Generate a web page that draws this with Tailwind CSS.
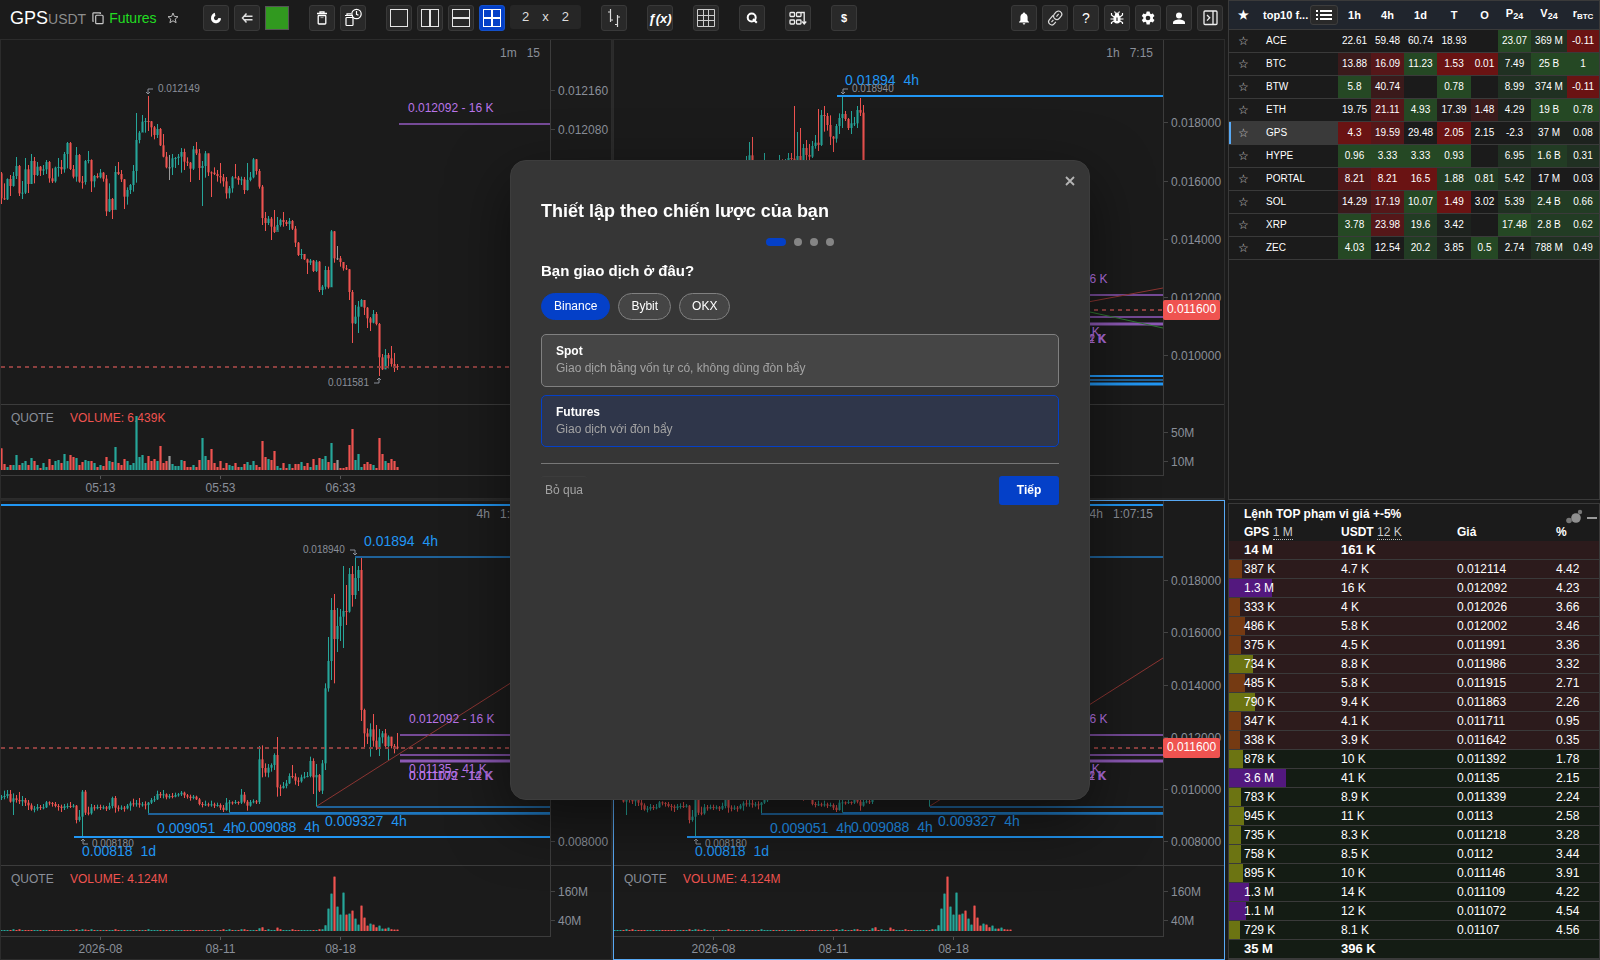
<!DOCTYPE html>
<html lang="vi">
<head>
<meta charset="utf-8">
<title>GPSUSDT Futures</title>
<script src="https://cdn.jsdelivr.net/npm/@tailwindcss/browser@4"></script>
</head>
<body class="bg-[#1b1b1b] text-white font-['Liberation_Sans',Arial,sans-serif]">
<div class="flex h-screen overflow-hidden">

<!-- Charts side -->
<div class="flex min-w-0 flex-1 flex-col">
<header class="flex h-[39px] shrink-0 items-start pl-2.5 pr-0.5 pt-[5px]">
  <div class="flex h-[26px] w-[193px] shrink-0 items-center">
    <div class="flex items-baseline"><h1 class="text-lg leading-6">GPS</h1><span class="text-sm text-[#8d8d8d]">USDT</span></div>
    <button aria-label="Sao chép" class="ml-1.5 text-[#c8c8c8]"><svg width="12" height="13" viewBox="0 0 13 14" fill="none" stroke="currentColor" stroke-width="1.300"><rect x="4" y="3.500" width="8" height="9" rx="1"/><path d="M2 10H1V1.500A.8.8 0 0 1 1.800.8H9V2"/></svg></button>
    <span class="ml-[5px] text-sm text-[#22dd22]">Futures</span>
    <button aria-label="Yêu thích" class="ml-2.5 text-[#bbb]"><svg width="12" height="12" viewBox="0 0 12 12" fill="none" stroke="currentColor"><path d="M6 1l1.400 3.400 3.600.3-2.800 2.400.9 3.600L6 8.800l-3.100 1.900.9-3.600L1 4.700l3.600-.3z"/></svg></button>
  </div>
  <div class="flex gap-5">
    <div class="flex gap-[5px]">
      <button aria-label="Nam châm" class="flex size-[26px] items-center justify-center rounded-[3px] border border-[#393939] bg-[#292929]"><svg width="12" height="12" viewBox="0 0 12 12" fill="#fff"><path d="M4.800.800C2.600 1.600 1 3.600 1 6.200 1 9 3.200 11.200 6 11.200s5-2.200 5-5L8.300 6C8.200 7.400 7.200 8.200 6 8.200c-1.300 0-2-1-2-2.100 0-1 .6-1.700 1.400-2z"/></svg></button>
      <button aria-label="Quay lại" class="flex size-[26px] items-center justify-center rounded-[3px] border border-[#393939] bg-[#292929]"><svg width="12" height="12" viewBox="0 0 12 12" fill="none" stroke="#ddd" stroke-width="1.500"><path d="M5.500 1.500 1.500 6l4 4.500M3 4.300h8.500M3 7.700h8.500"/></svg></button>
      <button aria-label="Màu" class="mt-px size-6 border border-[#555] bg-[#31991f]"></button>
    </div>
    <div class="flex gap-[5px]">
      <button aria-label="Xóa" class="flex size-[26px] items-center justify-center rounded-[3px] border border-[#393939] bg-[#292929]"><svg width="12" height="14" viewBox="0 0 12 14" fill="none" stroke="#fff" stroke-width="1.300"><path d="M1 2.500h10M4 2V.800h4V2"/><rect x="2.200" y="4.500" width="7.600" height="8.500" rx=".8"/><path d="M4.500 6.500h3" stroke="#888"/></svg></button>
      <button aria-label="Xóa theo thời gian" class="flex size-[26px] items-center justify-center rounded-[3px] border border-[#393939] bg-[#292929]"><svg width="18" height="20" viewBox="0 0 18 20" fill="none" stroke="#fff" stroke-width="1.200"><path d="M1 7.500h8M3 7V5.800h4"/><rect x="2" y="9.500" width="7" height="8" rx=".8"/><circle cx="12.500" cy="6" r="4.700"/><path d="M12.500 3v3.300l2 1"/></svg></button>
    </div>
    <div class="flex gap-[5px]">
      <button aria-label="1 biểu đồ" class="flex size-[26px] items-center justify-center rounded-[3px] border border-[#393939] bg-[#292929]"><svg width="18" height="18" fill="none" stroke="#e6e6e6"><rect x=".5" y=".5" width="17" height="17"/></svg></button>
      <button aria-label="2 cột" class="flex size-[26px] items-center justify-center rounded-[3px] border border-[#393939] bg-[#292929]"><svg width="18" height="18" fill="none" stroke="#e6e6e6"><rect x=".5" y=".5" width="17" height="17"/><path d="M9 0v18" stroke-width="2"/></svg></button>
      <button aria-label="2 hàng" class="flex size-[26px] items-center justify-center rounded-[3px] border border-[#393939] bg-[#292929]"><svg width="18" height="18" fill="none" stroke="#e6e6e6"><rect x=".5" y=".5" width="17" height="17"/><path d="M0 9h18" stroke-width="2"/></svg></button>
      <button aria-label="4 biểu đồ" class="flex size-[26px] items-center justify-center rounded-[3px] border border-[#1450c8] bg-[#0440c8]"><svg width="18" height="18" fill="none" stroke="#fff"><rect x=".5" y=".5" width="17" height="17"/><path d="M9 0v18M0 9h18" stroke-width="2"/></svg></button>
      <div class="flex h-6 w-[71px] items-center justify-between rounded-[3px] bg-[#262626] px-3 text-[13px] text-[#ddd]"><span>2</span><span>x</span><span>2</span></div>
    </div>
    <button aria-label="Kiểu nến" class="flex size-[26px] items-center justify-center rounded-[3px] border border-[#393939] bg-[#292929]"><svg width="14" height="20" viewBox="0 0 14 20" fill="none" stroke="#ddd" stroke-width="1.200"><path d="M3.500 1v13M1 4h2.500M3.500 12H6M10.500 7v12M8 16.500h2.500M10.500 9H13"/></svg></button>
    <button aria-label="Chỉ báo" class="flex size-[26px] items-center justify-center rounded-[3px] border border-[#393939] bg-[#292929] text-[13px] font-bold italic leading-none">ƒ(x)</button>
    <button aria-label="Lưới" class="flex size-[26px] items-center justify-center rounded-[3px] border border-[#393939] bg-[#292929]"><svg width="18" height="18" fill="none" stroke="#ccc"><path d="M.5.5h17v17H.5zM6.500 0v18M11.500 0v18M0 6.500h18M0 11.500h18"/></svg></button>
    <button aria-label="Tìm kiếm" class="flex size-[26px] items-center justify-center rounded-[3px] border border-[#393939] bg-[#292929]"><svg width="12" height="12" viewBox="0 0 12 12" fill="none" stroke="#fff" stroke-width="2"><circle cx="5.700" cy="5.500" r="4"/><path d="m7 7 3.800 3.800"/></svg></button>
    <button aria-label="Sắp xếp" class="flex size-[26px] items-center justify-center rounded-[3px] border border-[#393939] bg-[#292929]"><svg width="18" height="15" viewBox="0 0 18 15" fill="none" stroke="#eee" stroke-width="1.300"><rect x="1" y="1.500" width="4.500" height="4" rx=".8"/><rect x="7.500" y="1.500" width="4.500" height="4" rx=".8"/><rect x="1" y="9" width="4.500" height="4" rx=".8"/><rect x="7.500" y="9" width="4.500" height="4" rx=".8"/><path d="M12 1.500h3.200V13m-2-2.500 2 2.500 2-2.500"/></svg></button>
    <button aria-label="Giá" class="flex size-[26px] items-center justify-center rounded-[3px] border border-[#393939] bg-[#292929] text-[11px] font-bold">$</button>
  </div>
  <div class="ml-auto flex gap-[5px]">
    <button aria-label="Thông báo" class="flex size-[26px] items-center justify-center rounded-[3px] border border-[#393939] bg-[#292929]"><svg width="12" height="13" viewBox="0 0 12 13" fill="#fff"><path d="M6 .5c.6 0 1 .4 1 1C8.800 2 9.600 3.500 9.600 5.200V8.500L11 10v.6H1V10l1.400-1.500V5.200C2.400 3.500 3.200 2 5 1.500c0-.6.4-1 1-1zM4.700 11.300h2.600a1.300 1.300 0 0 1-2.600 0z"/></svg></button>
    <button aria-label="Liên kết" class="flex size-[26px] items-center justify-center rounded-[3px] border border-[#393939] bg-[#292929]"><svg width="16" height="16" viewBox="0 0 16 16" fill="none" stroke="#ddd" stroke-width="1.200"><g transform="rotate(40 8 8)"><rect x="5" y="-.3" width="6.500" height="9" rx="3.200"/><path d="M8.200 2.500v3.500"/><path d="M4.800 7.300v5.500a3.200 3.200 0 0 0 6.400 0V10.500"/><path d="M8 10.500v3"/></g></svg></button>
    <button aria-label="Trợ giúp" class="flex size-[26px] items-center justify-center rounded-[3px] border border-[#393939] bg-[#292929] text-sm">?</button>
    <button aria-label="Báo lỗi" class="flex size-[26px] items-center justify-center rounded-[3px] border border-[#393939] bg-[#292929]"><svg width="14" height="14" viewBox="0 0 14 14" stroke="#fff" stroke-width="1.200" fill="none"><ellipse cx="7" cy="8" rx="2.900" ry="4" fill="#fff"/><circle cx="7" cy="3.500" r="1.500" fill="#fff"/><path d="M4 6 1.500 4V2M10 6l2.500-2V2M4 8H.5M10 8h3.500M4 10l-2.500 1.500V13M10 10l2.500 1.500V13M5.500 2 4.500.5M8.500 2l1-1.500"/><path d="M7 6.500v3.500" stroke="#292929"/></svg></button>
    <button aria-label="Cài đặt" class="flex size-[26px] items-center justify-center rounded-[3px] border border-[#393939] bg-[#292929]"><svg width="16" height="16" viewBox="0 0 24 24" fill="#fff"><path d="M19.400 13c0-.3.100-.6.100-1s0-.7-.1-1l2-1.600a.5.5 0 0 0 .1-.6l-1.900-3.300a.5.5 0 0 0-.6-.2l-2.400 1a7 7 0 0 0-1.600-1l-.4-2.500a.5.5 0 0 0-.5-.4h-3.800a.5.5 0 0 0-.5.400L9.400 5.300a7 7 0 0 0-1.600 1l-2.400-1a.5.5 0 0 0-.6.200L2.900 8.800a.5.5 0 0 0 .1.600L5 11c0 .3-.1.700-.1 1s0 .7.100 1l-2 1.600a.5.5 0 0 0-.1.600l1.900 3.300c.1.200.4.300.6.200l2.400-1a7 7 0 0 0 1.600 1l.4 2.500c0 .2.200.4.500.4h3.800c.3 0 .5-.2.500-.4l.4-2.500a7 7 0 0 0 1.600-1l2.400 1c.2.100.5 0 .6-.2l1.900-3.300a.5.5 0 0 0-.1-.6zM12 15.500a3.500 3.500 0 1 1 0-7 3.500 3.500 0 0 1 0 7z"/></svg></button>
    <button aria-label="Tài khoản" class="flex size-[26px] items-center justify-center rounded-[3px] border border-[#393939] bg-[#292929]"><svg width="12" height="13" viewBox="0 0 12 13" fill="#fff"><circle cx="6" cy="3.500" r="3"/><path d="M0 12V10.500C0 8.600 3.500 7.600 6 7.600s6 1 6 2.900V12z"/></svg></button>
    <button aria-label="Ẩn bảng" class="flex size-[26px] items-center justify-center rounded-[3px] border border-[#393939] bg-[#292929]"><svg width="15" height="16" viewBox="0 0 15 16" fill="none" stroke="#eee" stroke-width="1.300"><rect x="1" y="1" width="13" height="13.500" rx="1"/><path d="M10 1v13.500M4 5l2.700 2.800L4 10.600"/></svg></button>
  </div>
</header>
<main id="charts" class="grid min-h-0 flex-1 grid-cols-2 grid-rows-2 gap-px bg-[#2a2a2a] [&_text]:whitespace-pre"></main>
</div>

<!-- Sidebar -->
<aside class="ml-[3px] flex w-[372px] shrink-0 flex-col gap-[3px]">
  <section class="min-h-0 flex-1 border border-[#3a3a3a]">
    <table class="w-full table-fixed border-collapse text-center text-[10px]">
      <colgroup><col class="w-[29px]"><col><col class="w-[33px]"><col class="w-[33px]"><col class="w-[33px]"><col class="w-[34px]"><col class="w-[27px]"><col class="w-[33px]"><col class="w-[36px]"><col class="w-[32px]"></colgroup>
      <thead><tr class="h-7 border-b border-[#3a3a3a] bg-[#20252d] text-[11px] font-bold leading-4">
        <th class="text-xs leading-4">★</th>
        <th><div class="flex items-center justify-between pl-[5px]"><span>top10 f...</span><button aria-label="Danh sách" class="flex h-5 w-7 items-center justify-center rounded-[3px] border border-[#3d3d3d] bg-[#292929]"><svg width="16" height="12" stroke="#fff" stroke-width="2"><path d="M0 2h2M4 2h12M0 6h2M4 6h12M0 10h2M4 10h12"/></svg></button></div></th>
        <th>1h</th><th>4h</th><th>1d</th><th>T</th><th>O</th>
        <th class="pb-1">P<sub class="text-[9px]">24</sub></th><th class="pb-1">V<sub class="text-[9px]">24</sub></th><th class="whitespace-nowrap pb-1">r<sub class="text-[8px]">BTC</sub></th>
      </tr></thead>
      <tbody id="coins"></tbody>
    </table>
  </section>
  <section class="shrink-0 border border-[#3a3a3a] text-xs">
    <div class="flex h-[19px] items-end justify-between pl-[15px] pr-0.5">
      <h2 class="font-bold leading-[18px]">Lệnh TOP phạm vi giá +-5%</h2>
      <div class="relative h-3.5">
        <button aria-label="Bong bóng" class="absolute right-3.5 top-0"><svg width="17" height="16" fill="#909090"><circle cx="10" cy="9" r="4.800"/><circle cx="3" cy="11.500" r="2.800" fill="#777"/><circle cx="14" cy="3" r="2.200" fill="#777"/></svg></button>
        <button aria-label="Thu gọn" class="absolute right-0 top-0"><svg width="11" height="16" stroke="#999" stroke-width="2"><path d="M1 9h10"/></svg></button>
      </div>
    </div>
    <table class="w-full table-fixed border-collapse text-left">
      <colgroup><col class="w-28"><col class="w-[116px]"><col class="w-[99px]"><col></colgroup>
      <thead><tr class="h-[18px] leading-4"><th class="pl-[15px]">GPS <span class="border-b border-dotted border-[#bbb] font-normal text-[#ccc]">1 M</span></th><th>USDT <span class="border-b border-dotted border-[#bbb] font-normal text-[#ccc]">12 K</span></th><th>Giá</th><th>%</th></tr></thead>
      <tbody id="book"></tbody>
    </table>
  </section>
</aside>
</div>

<!-- Setup dialog -->
<div role="dialog" aria-labelledby="dlg" class="fixed inset-0 m-auto flex h-[640px] w-[580px] flex-col rounded-2xl border border-[#3d3d3d] bg-[#363636] px-[30px] pt-9 shadow-[0_20px_60px_rgba(0,0,0,0.5)]">
  <button aria-label="Đóng" class="absolute right-3 top-[13px] flex size-3.5 items-center justify-center text-[#b5b5b5]"><svg width="10" height="10" stroke="currentColor" stroke-width="1.800"><path d="m1 1 8 8M9 1 1 9"/></svg></button>
  <h2 id="dlg" class="text-lg font-bold leading-7">Thiết lập theo chiến lược của bạn</h2>
  <div class="mt-[13px] flex justify-center gap-2"><span class="h-2 w-5 rounded bg-[#0440c8]"></span><span class="size-2 rounded-full bg-[#858585]"></span><span class="size-2 rounded-full bg-[#858585]"></span><span class="size-2 rounded-full bg-[#858585]"></span></div>
  <h3 class="mt-[15px] text-[15px] font-bold leading-5">Bạn giao dịch ở đâu?</h3>
  <div class="mt-3 flex gap-2 text-xs">
    <button class="h-[27px] rounded-full border border-[#0440c8] bg-[#0440c8] px-3 pb-px">Binance</button>
    <button class="h-[27px] rounded-full border border-[#808080] bg-[#454545] px-3 pb-px">Bybit</button>
    <button class="h-[27px] rounded-full border border-[#808080] bg-[#454545] px-3 pb-px">OKX</button>
  </div>
  <button class="mt-3.5 h-[53px] rounded-[5px] border border-[#808080] bg-[#454545] px-3.5 pb-0.5 text-left text-xs"><strong class="block leading-[17px]">Spot</strong><span class="block leading-[17px] text-[#a3a3a3]">Giao dịch bằng vốn tự có, không dùng đòn bẩy</span></button>
  <button class="mt-2 h-[52px] rounded-[5px] border border-[#0440c8] bg-[#2f364a] px-3.5 text-left text-xs"><strong class="block leading-[17px]">Futures</strong><span class="block leading-[17px] text-[#a3a3a3]">Giao dịch với đòn bẩy</span></button>
  <div class="mt-4 flex items-start justify-between border-t border-[#777] pt-3 text-xs">
    <button class="h-[29px] rounded-[3px] border-t border-[#3c3c3c] px-1 pb-0.5 text-[#a3a3a3]">Bỏ qua</button>
    <button class="h-[29px] w-[60px] rounded-[3px] bg-[#0440c8] pb-0.5 font-bold">Tiếp</button>
  </div>
</div>

<script>
const RED = '#ef5350', GREEN = '#26a69a', GREY = '#9a9a9a', BLUE = '#2196f3', PURPLE = '#b974e8', MUTED = '#8a8f99';

// close,high,low per candle in thirds of a pixel from the top; each opens at the previous close
const minute = { open: 400, neutral: [56, 112], candles: `475,396,492 478,430,480 417,415,480 438,405,468 408,396,440 378,351,417 460,375,468 458,423,477 388,354,462 432,375,459 363,342,432 405,351,430 380,366,408 392,378,408 388,375,405 366,360,402 415,363,428 424,385,429 383,380,428 381,354,410 388,360,402 342,336,398 309,306,385 387,306,390 410,375,415 345,321,425 425,342,428 426,408,446 363,360,434 360,333,370 424,358,456 408,405,442 412,400,415 398,387,415 416,396,425 514,405,528 477,430,516 510,474,537 396,378,508 402,366,405 418,390,426 470,417,507 450,442,494 435,432,462 393,375,455 300,219,428 278,273,310 245,225,276 243,234,278 244,168,273 262,243,290 285,258,298 267,252,294 316,264,318 350,282,352 382,336,385 382,345,420 355,342,405 354,351,384 350,342,375 336,324,398 365,326,390 368,352,378 386,366,426 328,318,390 340,306,345 384,327,420 378,363,498 340,333,413 397,340,408 398,394,471 402,382,405 408,390,425 412,369,430 424,402,440 460,411,476 445,438,475 412,408,458 413,372,415 420,408,434 418,410,435 450,411,462 420,369,452 412,396,424 358,354,415 393,357,404 440,387,446 534,435,555 549,516,573 536,528,555 560,531,600 576,510,579 555,531,570 540,536,560 546,516,560 552,540,558 543,534,570 566,540,570 608,558,621 645,606,648 642,627,657 658,642,660 668,656,702 662,657,675 693,660,696 665,660,696 750,663,756 740,735,765 690,678,748 742,680,746 574,570,741 655,573,668 655,618,660 666,648,680 685,666,692 688,675,690 756,687,780 850,750,909 830,795,852 800,783,879 780,777,800 803,780,825 835,801,864 848,831,873 822,810,850 852,816,856 952,849,1008 988,942,990 945,927,988 955,939,985 972,918,980 978,939,996 980,972,990`,
  volume: [65,18,9,15,15,45,15,21,27,15,36,27,15,6,21,9,33,15,27,30,21,48,27,45,39,36,15,24,30,27,27,21,9,15,12,39,27,24,69,21,15,33,27,15,21,162,39,45,21,42,27,33,27,72,21,27,42,18,12,12,30,27,9,9,15,9,30,96,42,30,63,21,9,27,6,21,15,12,21,9,9,18,24,15,27,15,9,87,39,33,30,57,12,6,21,6,18,6,18,18,24,12,21,9,33,15,36,33,42,24,81,21,30,6,6,9,75,123,30,48,9,18,24,18,15,6,96,48,27,21,33,27,9] };
const fourHour = { open: 474, offset: 139, candles: `470,465,480 468,452,478 462,450,475 485,450,488 475,460,525 480,465,488 484,456,492 480,468,498 488,474,498 496,480,510 508,490,512 506,498,517 501,492,512 503,495,510 502,492,508 487,483,504 489,484,496 492,486,500 498,486,502 500,492,512 504,494,516 499,492,510 498,490,506 500,486,504 497,492,503 540,495,550 530,510,545 455,450,588 518,450,525 520,500,526 502,492,524 505,495,512 501,494,508 504,494,510 502,496,508 506,498,513 498,488,510 474,470,505 503,468,518 506,496,514 503,496,510 505,498,515 497,492,508 490,484,512 492,476,500 490,480,500 494,474,503 493,486,500 495,484,508 488,486,522 480,474,492 478,468,486 462,452,480 466,456,474 463,450,475 472,460,478 468,462,476 470,459,475 465,458,472 463,459,470 458,453,468 466,455,474 470,462,476 474,464,482 470,465,478 478,467,480 492,474,496 495,486,502 493,482,498 495,488,500 493,482,500 497,488,504 495,488,500 503,490,510 510,495,516 488,474,512 487,480,518 489,484,494 486,480,492 488,484,494 464,447,492 485,456,490 497,480,512 486,480,500 484,478,490 486,480,492 358,318,492 384,316,412 398,370,410 383,372,412 375,370,395 345,340,390 442,291,470 444,434,468 438,426,446 430,420,445 408,400,432 410,375,415 422,400,434 424,412,438 412,404,428 410,396,416 408,396,412 363,350,412 412,355,462 405,372,500 452,402,456 370,360,462 145,130,390 63,-9,155 -90,-126,120 -3,-138,130 -42,-96,36 -70,-93,3 -87,-222,24 -85,-165,-45 -198,-216,-82 -135,-222,-100 -186,-250,-123 -210,-222,-147 210,-247,243 280,206,325 290,265,312 268,250,350 302,222,320 322,255,330 292,267,348 280,273,310 318,267,325 290,286,362 318,290,325 320,312,340 325,279,328`,
  volume: Array(133).fill(3).map((v, i) => ({4:5,6:5,25:5,27:5,28:4,30:5,38:5,49:5,74:5,76:5,80:5,81:5,86:8,87:11,89:5,92:10,93:5,97:5,106:5,107:5,108:17,109:67,110:112,111:163,112:73,113:49,114:115,115:49,116:52,117:61,118:37,119:19,120:76,121:40,122:16,123:22,124:19,125:11,126:16,127:7,128:7,129:10,130:5,131:4,132:4})[i] || v) };
const hour = { open: 400, first: 132, candles: `360,348,400 346,306,400 370,291,400 395,370,400 390,380,400 385,375,400 370,339,400 375,365,400 372,368,400 380,370,400 375,365,400 362,345,400 364,358,400 362,357,400 354,339,400 356,339,400 370,198,400 348,276,400 360,264,400 324,312,400 345,300,400 350,312,400 318,303,354 308,285,326 315,207,333 225,210,318 228,198,275 255,219,272 290,226,315 296,288,336 258,252,308 234,220,282 222,171,264 237,213,243 264,234,270 250,213,282 250,231,258 210,198,264 218,174,228 700,195,720`, volume: [] };

function decode(set) {
  let open = set.open;
  return set.candles.split(' ').map((c, i) => {
    const [close, high, low] = c.split(',').map(Number);
    const color = set.neutral?.includes(i) ? GREY : close > open ? RED : GREEN;
    const d = { x: (set.first || 0) + 3 * i, top: Math.min(open, close) / 3, h: Math.max(1, Math.abs(close - open) / 3), high: high / 3, low: low / 3, color };
    open = close;
    return d;
  });
}
const text = (x, y, s, size = 12, fill = MUTED, anchor = 'start') =>
  `<text x="${x}" y="${y + (size > 10 ? 5 : 4)}" font-size="${size}" fill="${fill}" text-anchor="${anchor}">${s}</text>`;
const line = (x, y, color, w = 2, extra = '') =>
  `<line x1="${x}" x2="100%" y1="${y}" y2="${y}" stroke="${color}" stroke-width="${w}" ${extra}/>`;
const trend = (x1, y1, x2, y2, color) => `<line x1="${x1}" y1="${y1}" x2="${x2}" y2="${y2}" stroke="${color}"/>`;
const dash = y => line(0, y, '#8c403f', 2, 'stroke-dasharray="4 4"');
const hook = (x, y, flipX, flipY) => `<path transform="translate(${x} ${y}) scale(${flipX} ${flipY})" d="M5 0H0V5M-2 3 0 5 2 3" fill="none" stroke="${MUTED}"/>`;

function pricePlot(set) {
  const body = decode(set).map(c => `<rect x="${c.x}" y="${c.top}" width="3" height="${c.h}" fill="${c.color}" opacity=".55"/><rect x="${c.x + 1}" y="${c.high}" width="1" height="${c.low - c.high}" fill="${c.color}"/>`).join('');
  return `<g transform="translate(-1 ${set.offset || 0})">${body}</g>`;
}
function volumePlot(set) {
  const colors = decode(set).map(c => c.color);
  return set.volume.map((v, i) => `<rect x="${3 * i - 1}" y="${65 - v / 3}" width="3" height="${v / 3}" fill="${colors[i]}" opacity=".6"/><rect x="${3 * i}" y="${65 - v / 3}" width="1" height="${v / 3}" fill="${colors[i]}"/>`).join('');
}
const marks = (y1, y2, y3) => line(399, y1, '#754a97') + line(399, y2, '#754a97') + line(399, y3, '#8c59b5', 3);
const fourHourPane = {
  set: fourHour, clock: '4h   1:07:15', vol: 'VOLUME: 4.124M', times: ['2026-08', '08-11', '08-18'],
  axis: [[79, '0.018000'], [131, '0.016000'], [184, '0.014000'], [236, '0.012000'], [288, '0.010000'], [340, '0.008000']], vaxis: [[25, '160M'], [54, '40M']], tag: 247,
  overlay: line(0, 4, BLUE) + dash(247) + line(354, 56, '#1f6299') + text(363, 40, '0.01894  4h', 14, BLUE) + text(302, 48, '0.018940', 10) + hook(354, 49, -1, 1)
    + marks(234, 254, 260) + trend(316, 305, 549, 157, '#8c3532')
    + text(408, 217, '0.012092 - 16 K', 12, PURPLE) + text(408, 267, '0.01135 - 41 K', 12, PURPLE) + text(408, 274, '0.011109 - 14 K', 12, PURPLE) + text(408, 274, '0.011072 - 12 K', 12, PURPLE)
    + line(316, 306, '#1f6299') + line(147, 313, '#1f6299') + line(229, 312, '#1c77c0') + line(73, 336, BLUE)
    + text(156, 327, '0.009051  4h', 14, BLUE) + text(237, 326, '0.009088  4h', 14, BLUE) + text(324, 320, '0.009327  4h', 14, BLUE)
    + hook(82, 343, 1, -1) + text(91, 342, '0.008180', 10) + text(81, 350, '0.00818  1d', 14, BLUE)
};
const panes = [
  { set: minute, clock: '1m   15', vol: 'VOLUME: 6.439K', times: ['05:13', '05:53', '06:33'], axis: [[50, '0.012160'], [89, '0.012080']], vaxis: [],
    overlay: dash(327) + line(398, 84, '#754a97') + text(407, 67, '0.012092 - 16 K', 12, PURPLE) + hook(147, 49, 1, 1) + text(157, 48, '0.012149', 10) + text(327, 342, '0.011581', 10) + hook(378, 343, -1, -1) },
  { set: hour, clock: '1h   7:15', vol: 'VOLUME: 1.210M', times: [], axis: [[82, '0.018000'], [141, '0.016000'], [199, '0.014000'], [257, '0.012000'], [315, '0.010000']], vaxis: [[27, '50M'], [56, '10M']], tag: 270,
    overlay: dash(270) + line(223, 56, BLUE) + text(231, 40, '0.01894  4h', 14, BLUE) + hook(229, 49, 1, 1) + text(238, 48, '0.018940', 10)
      + marks(255, 277, 284) + text(408, 238, '0.012092 - 16 K', 12, PURPLE) + text(408, 291, '0.01135 - 41 K', 12, PURPLE) + text(408, 298, '0.011109 - 14 K', 12, PURPLE) + text(408, 298, '0.011072 - 12 K', 12, PURPLE)
      + line(200, 336, BLUE) + line(200, 340, '#1f6299') + line(200, 344, BLUE, 3)
      + trend(420, 272, 549, 248, '#8c3532') + trend(476, 272, 549, 288, '#2f7a31') },
  fourHourPane,
  { ...fourHourPane, active: true }
];
const axisText = ([y, s]) => `<path d="M0 ${y + .5}h4" stroke="#444"/>` + text(7, y, s);
document.getElementById('charts').innerHTML = panes.map(p => `
  <section class="flex min-w-0 flex-col border bg-[#1b1b1b] ${p.active ? 'border-[#58a9f5]' : 'border-[#2c2c2c]'}">
    <div class="flex min-h-0 flex-1">
      <div class="relative min-w-0 flex-1">
        <svg class="absolute inset-0 size-full">${pricePlot(p.set)}${p.overlay}</svg>
        <div class="absolute right-2.5 top-1.5 whitespace-pre text-xs leading-[14px] text-[#8a8f99]">${p.clock}</div>
      </div>
      <div class="relative w-[61px] border-l border-[#3c3c3c]">
        <svg class="absolute inset-0 size-full">${p.axis.map(axisText).join('')}</svg>
        ${p.tag ? `<div class="absolute -left-px flex h-5 w-[57px] items-center justify-center rounded-[2px] bg-[#ef5350] pb-0.5 text-xs" style="top:${p.tag - 10}px">0.011600</div>` : ''}
      </div>
    </div>
    <div class="flex h-[71px] border-t border-[#3c3c3c]">
      <svg class="h-full min-w-0 flex-1">${text(10, 12, 'QUOTE')}${text(69, 12, p.vol, 12, RED)}${volumePlot(p.set)}</svg>
      <svg class="h-full w-[61px] border-l border-[#3c3c3c]">${p.vaxis.map(axisText).join('')}</svg>
    </div>
    <div class="mr-[60px] h-[23px] border-t border-[#3c3c3c]">
      <svg class="size-full">${p.times.map((t, i) => `<path d="M${99.5 + 120 * i} 0v3" stroke="#555"/>` + text(99.5 + 120 * i, 11, t, 12, MUTED, 'middle')).join('')}</svg>
    </div>
  </section>`).join('');

// heat levels: r = red, g = green, higher digit is stronger
const heat = { r3: 'bg-[#6a1313]', r2: 'bg-[#551719]', r1: 'bg-[#3a1a1b]', r0: 'bg-[#231b1b]', g3: 'bg-[#254824]', g2: 'bg-[#223c24]', g1: 'bg-[#203022]', g0: 'bg-[#1d221e]' };
const coins = `ACE|22.61|59.48|60.74|18.93||23.07 g3|369 M g1|-0.11 r3
BTC|13.88 r1|16.09 r2|11.23 g3|1.53 r3|0.01 r3|7.49 g1|25 B g3|1 g3
BTW|5.8 g3|40.74 r1||0.78 g3||8.99 g1|374 M g1|-0.11 r3
ETH|19.75|21.11 r2|4.93 g3|17.39 r0|1.48 r1|4.29 g0|19 B g3|0.78 g3
GPS|4.3 r3|19.59 r2|29.48|2.05 r3|2.15|-2.3|37 M g0|0.08 g0
HYPE|0.96 g3|3.33 g3|3.33 g3|0.93 g3||6.95 g1|1.6 B g2|0.31 g1
PORTAL|8.21 r2|8.21 r3|16.5 r3|1.88 g2|0.81 g2|5.42 g1|17 M|0.03
SOL|14.29 r1|17.19 r2|10.07 g3|1.49 r3|3.02|5.39 g1|2.4 B g2|0.66 g2
XRP|3.78 g3|23.98 r2|19.6 g2|3.42 g0||17.48 g3|2.8 B g2|0.62 g2
ZEC|4.03 g3|12.54|20.2 g2|3.85 g0|0.5 g3|2.74 g0|788 M g1|0.49 g1`;
document.getElementById('coins').innerHTML = coins.split('\n').map(r => {
  const [name, ...cells] = r.split('|');
  const on = name === 'GPS';
  return `<tr class="h-[23px] border-b border-[#3a3a3a]"><td class="${on ? 'bg-[#3a3a3a] shadow-[inset_2px_0_0_#58a9f5]' : ''}"><button aria-label="Yêu thích ${name}" class="text-xs leading-4 text-[#ccc]">☆</button></td><td class="pl-2 text-left ${on ? 'bg-[#3a3a3a]' : ''}">${name}</td>` +
    cells.map(c => { const m = c.match(/^(.*?)(?: ([rg]\d))?$/); return `<td class="whitespace-nowrap ${heat[m[2]] || ''}">${m[1]}</td>`; }).join('') + '</tr>';
}).join('');

const book = `387 K|4.7 K|0.012114|4.42|13|o
1.3 M|16 K|0.012092|4.23|43|p
333 K|4 K|0.012026|3.66|11|o
486 K|5.8 K|0.012002|3.46|16|o
375 K|4.5 K|0.011991|3.36|12|o
734 K|8.8 K|0.011986|3.32|24|y
485 K|5.8 K|0.011915|2.71|16|o
790 K|9.4 K|0.011863|2.26|26|y
347 K|4.1 K|0.011711|0.95|12|o
338 K|3.9 K|0.011642|0.35|11|o
878 K|10 K|0.011392|1.78|14|y
3.6 M|41 K|0.01135|2.15|57|p
783 K|8.9 K|0.011339|2.24|12|y
945 K|11 K|0.0113|2.58|15|y
735 K|8.3 K|0.011218|3.28|12|y
758 K|8.5 K|0.0112|3.44|12|y
895 K|10 K|0.011146|3.91|14|y
1.3 M|14 K|0.011109|4.22|20|p
1.1 M|12 K|0.011072|4.54|17|p
729 K|8.1 K|0.01107|4.56|11|y`;
const bar = { o: 'bg-[#753a12]', p: 'bg-[#53187e]', y: 'bg-[#6c7412]' };
const total = (a, b, bg) => `<tr class="h-[19px] border-b border-[#3a3a3a] text-[13px] font-bold leading-4 ${bg}"><td class="pl-[15px]">${a}</td><td>${b}</td><td></td><td></td></tr>`;
document.getElementById('book').innerHTML = total('14 M', '161 K', 'bg-[#2c1b1c]') + book.split('\n').map((r, i) => {
  const [a, b, c, d, w, k] = r.split('|');
  return `<tr class="h-[19px] border-b border-[#3a3a3a] leading-4 ${i < 10 ? 'bg-[#2c1b1c]' : 'bg-[#141c14]'}"><td class="relative pl-[15px]"><span class="absolute inset-y-0 left-0 ${bar[k]}" style="width:${w}px"></span><span class="relative">${a}</span></td><td>${b}</td><td>${c}</td><td>${d}</td></tr>`;
}).join('') + total('35 M', '396 K', 'bg-[#141c14]');
</script>
</body>
</html>
